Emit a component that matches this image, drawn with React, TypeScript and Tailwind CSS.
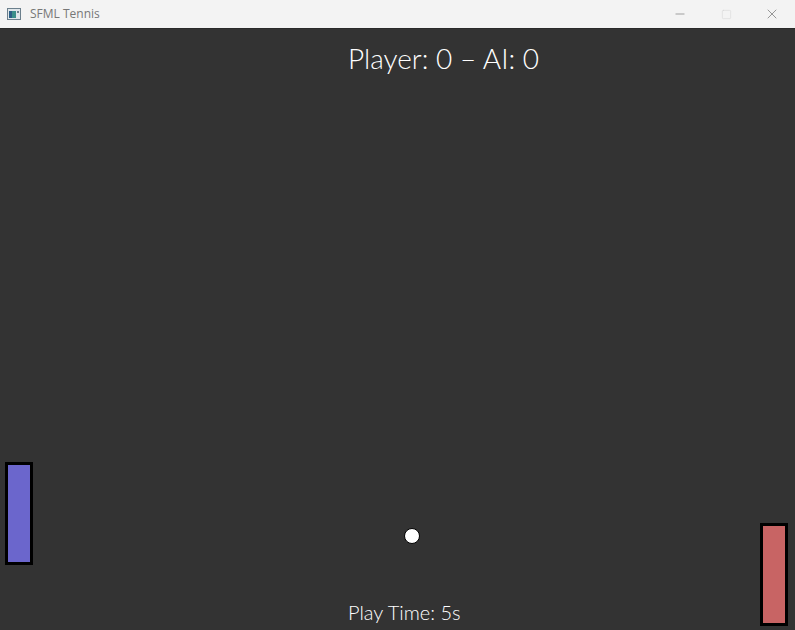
import { Minus, Square, X } from "lucide-react"

function WindowIcon() {
  return (
    <svg width="14" height="12" viewBox="0 0 14 12" className="shrink-0">
      <rect x="0.5" y="0.5" width="13" height="11" fill="#dfe6ea" stroke="#6b7f8c" />
      <rect x="2" y="3" width="7" height="7" fill="#3a8f8a" />
      <rect x="2" y="3" width="3" height="7" fill="#2c5f86" />
      <rect x="10" y="3" width="2" height="2" fill="#6b7f8c" />
    </svg>
  )
}

export default function App() {
  return (
    <div className="w-[795px] h-[630px] flex flex-col overflow-hidden bg-[#333333]">
      <div className="h-[29px] shrink-0 bg-[#f3f3f3] flex items-center border-b border-[#2a2a2a]">
        <div className="pl-[7px] flex items-center gap-[9px]">
          <WindowIcon />
          <span className="text-[12px] text-[#777] font-['Open_Sans',sans-serif]">SFML Tennis</span>
        </div>
        <div className="ml-auto flex items-center h-full">
          <div className="w-[46px] h-full flex items-center justify-center text-[#666]">
            <Minus size={14} strokeWidth={1} />
          </div>
          <div className="w-[46px] h-full flex items-center justify-center text-[#cfcfcf]">
            <Square size={11} strokeWidth={1} />
          </div>
          <div className="w-[46px] h-full flex items-center justify-center text-[#666]">
            <X size={16} strokeWidth={1} />
          </div>
        </div>
      </div>

      <div className="relative flex-1 font-['Lato',sans-serif] text-white">
        <div className="absolute left-[348px] top-[15px] text-[28px] font-light leading-none whitespace-nowrap">
          Player: 0 – AI: 0
        </div>

        <div className="absolute left-[5px] top-[433px] w-[28px] h-[103px] bg-[#6b66cc] border-[3px] border-black" />
        <div className="absolute left-[760px] top-[494px] w-[28px] h-[103px] bg-[#c86464] border-[3px] border-black" />
        <div className="absolute left-[404px] top-[499px] w-[16px] h-[16px] rounded-full bg-white border border-black" />

        <div className="absolute left-[348px] top-[573px] text-[20px] font-light leading-none whitespace-nowrap">
          Play Time: 5s
        </div>
      </div>
    </div>
  )
}
